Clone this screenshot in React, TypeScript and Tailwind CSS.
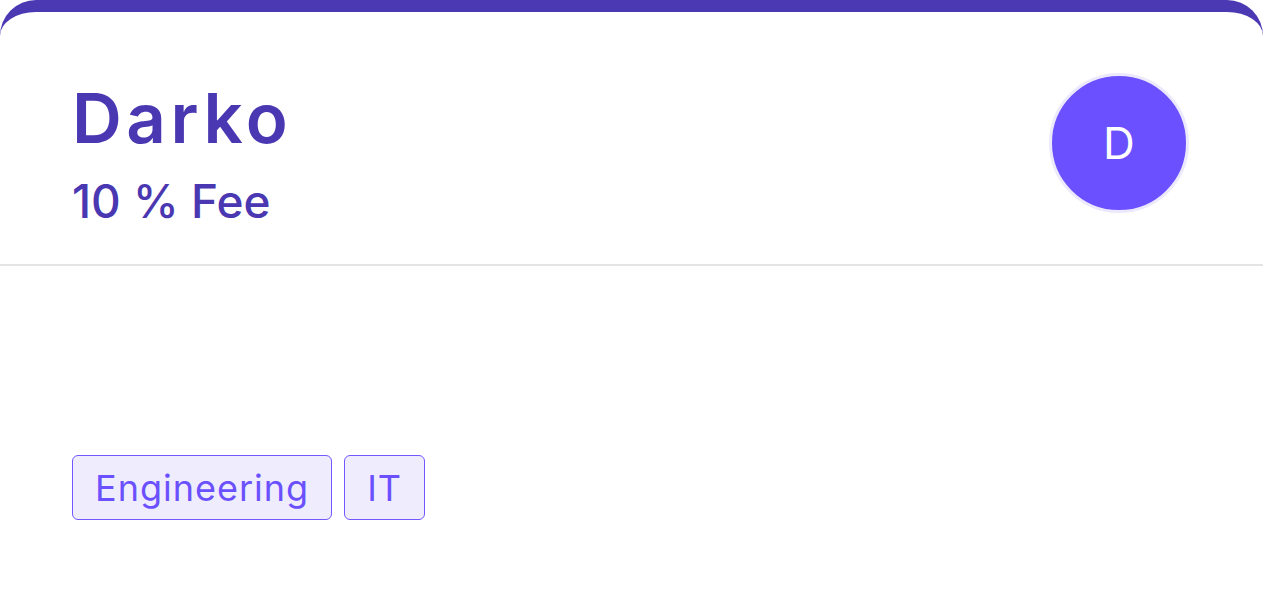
export default function App() {
  const tags = ["Engineering", "IT"];

  return (
    <div className="min-h-screen bg-white" style={{ fontFamily: "Inter, 'Noto Sans', sans-serif" }}>
      <div className="w-full rounded-t-[36px] border-t-[12px] border-[#4b38b3] bg-white">
        {/* header: name, fee, avatar */}
        <div className="flex h-[254px] items-start justify-between border-b-[2px] border-[#e4e4e4] pl-[72px] pr-[74px]">
          <div className="mt-[66px] flex flex-col">
            <h1 className="text-[69px] leading-[80px] font-semibold tracking-[4.5px] text-[#4a37b2]">Darko</h1>
            <p className="mt-[17px] text-[46px] leading-[52px] font-medium text-[#4a37b2]">10 % Fee</p>
          </div>
          <div className="mt-[61px] flex h-[140px] w-[140px] items-center justify-center rounded-full border-[3px] border-[#ece9fd] bg-[#6b50ff] text-[44px] text-white">
            D
          </div>
        </div>

        {/* tags */}
        <div className="flex gap-3 px-[72px] pt-[189px] pb-[80px]">
          {tags.map((t) => (
            <span
              key={t}
              className="flex h-[65px] items-center rounded-[6px] border-[1.5px] border-[#7059ff] bg-[#efecfd] px-[22px] text-[36px] tracking-[1px] text-[#6b50ff]"
            >
              {t}
            </span>
          ))}
        </div>
      </div>
    </div>
  );
}
